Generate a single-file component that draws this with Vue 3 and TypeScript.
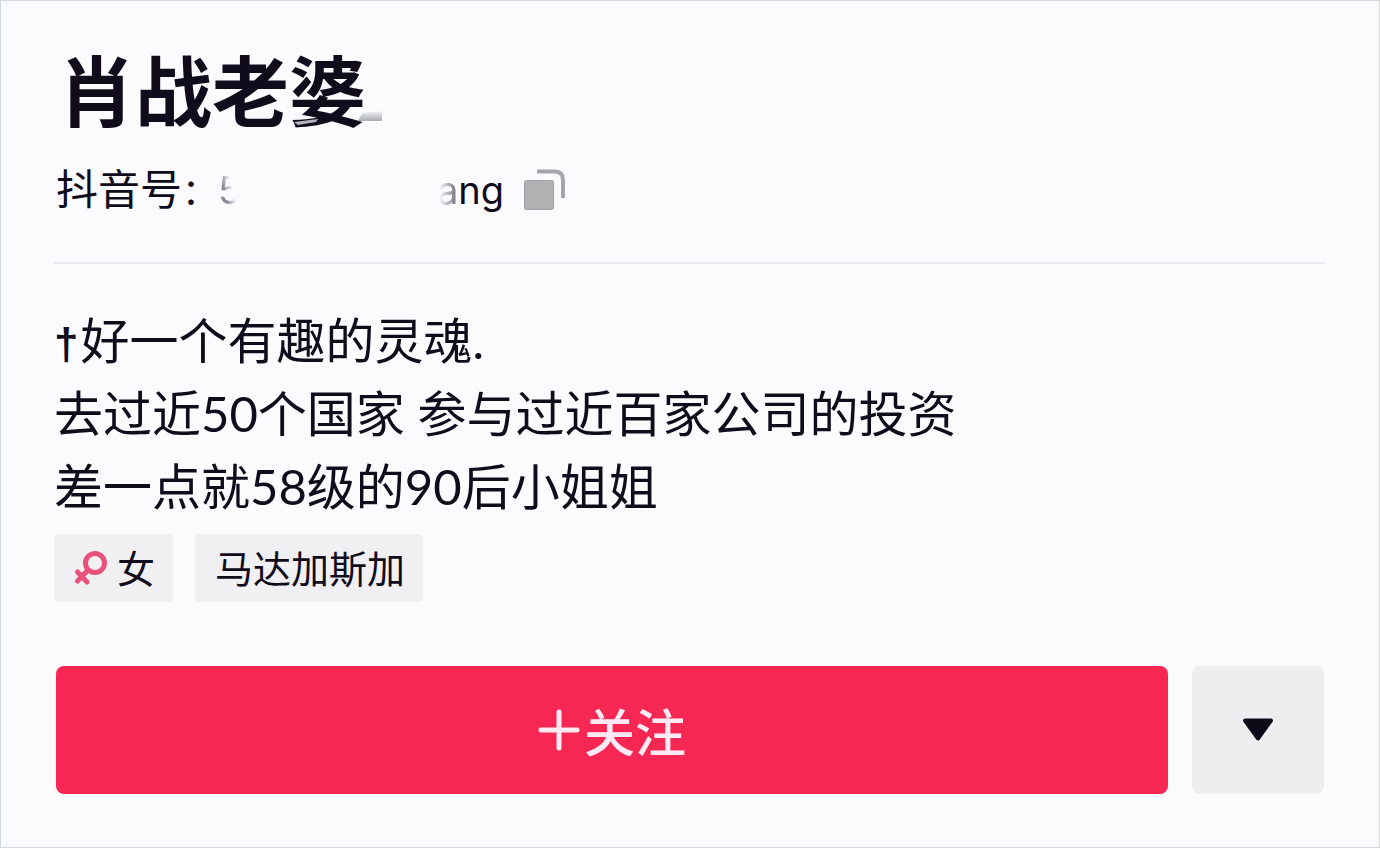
<script setup lang="ts">
const name = '肖战老婆'
const bio: string[] = [
  '好一个有趣的灵魂.',
  '去过近50个国家 参与过近百家公司的投资',
  '差一点就58级的90后小姐姐',
]
</script>

<template>
  <main class="profile">
    <header class="head">
      <h1 class="name">
        {{ name }}
        <svg class="smudge" viewBox="0 0 88 18" aria-hidden="true">
          <defs>
            <linearGradient id="smudgeFade" x1="0" y1="0" x2="0" y2="1">
              <stop offset="0" stop-color="#f4f5f9" />
              <stop offset="1" stop-color="#a9a9b2" />
            </linearGradient>
          </defs>
          <path d="M68 5 L88 3 V13 H64 Z" fill="url(#smudgeFade)" />
          <path d="M0 14 L24 11 L22 14 L4 17 Z" fill="#b4b4bc" />
        </svg>
      </h1>
      <div class="account">
        <span>抖音号<span class="colon">：</span></span>
        <span class="id"><span class="first">5</span><span class="last"><span class="faint">a</span>ng</span></span>
        <button class="copy" type="button" aria-label="复制抖音号">
          <svg viewBox="0 0 42 42" aria-hidden="true">
            <rect x="0.5" y="11.5" width="29" height="29" rx="2" fill="#b2b2b4" stroke="#9d9da1" />
            <path d="M13 2.5 H31 Q39 2.5 39 11 V29" fill="none" stroke="#a6a4a9" stroke-width="4" />
          </svg>
        </button>
      </div>
    </header>

    <section class="about">
      <p v-for="(line, i) in bio" :key="line" class="line"><span v-if="i === 0" class="dagger">†</span>{{ line }}</p>
      <ul class="tags">
        <li class="tag">
          <svg class="female" viewBox="0 0 34 34" aria-hidden="true">
            <g fill="none" stroke="#e9527c" stroke-linecap="round" stroke-width="5">
              <circle cx="21" cy="12" r="9.5" />
              <path d="M14 19 L3.5 30 M3.5 21 L13 31" />
            </g>
          </svg>
          <span>女</span>
        </li>
        <li class="tag">马达加斯加</li>
      </ul>
    </section>

    <div class="actions">
      <button class="follow" type="button">
        <svg class="plus" viewBox="0 0 42 42" aria-hidden="true">
          <path d="M21 3 V39 M3 21 H39" fill="none" stroke="#ffeaf3" stroke-width="5" stroke-linecap="round" />
        </svg>
        <span>关注</span>
      </button>
      <button class="more" type="button" aria-label="更多">
        <svg viewBox="0 0 32 24" aria-hidden="true">
          <path d="M3 2.5 H29 L16 20.5 Z" fill="#0e0b18" stroke="#0e0b18" stroke-width="4" stroke-linejoin="round" />
        </svg>
      </button>
    </div>
  </main>
</template>

<style>
body {
  margin: 0;
  background: #fbfbfe;
}
</style>

<style scoped>
.profile {
  box-sizing: border-box;
  min-height: 100vh;
  padding: 37px 54px 50px 53px;
  border: 1px solid #d3d8dd;
  background: #fbfbfe;
  color: #100c1c;
  font-family: Lato, "Noto Sans CJK SC", sans-serif;
}

.head {
  padding-bottom: 42px;
  border-bottom: 2px solid #e9eaed;
}

.name {
  position: relative;
  width: max-content;
  margin: 0;
  padding-left: 4px;
  font-family: "Noto Sans CJK SC", sans-serif;
  font-size: 77px;
  line-height: 100px;
  font-weight: 700;
}

.smudge {
  position: absolute;
  right: -16px;
  bottom: 12px;
  width: 88px;
  height: 18px;
}

.account {
  display: flex;
  align-items: center;
  margin-top: 22px;
  padding-left: 2px;
  font-size: 42px;
  line-height: 58px;
}

.colon {
  font-size: 36px;
}

.id {
  display: flex;
  justify-content: space-between;
  width: 286px;
  font-family: Inter, sans-serif;
  font-size: 38px;
}

.first {
  color: #8b8893;
  mask-image: linear-gradient(75deg, #000 35%, transparent 60%);
}

.faint {
  color: #77737f;
  mask-image: linear-gradient(90deg, transparent 10%, #000 90%);
}

.copy {
  margin-left: 20px;
  padding: 0;
  border: 0;
  background: none;
}

.copy svg {
  display: block;
  width: 42px;
  height: 42px;
}

.about {
  padding-top: 40px;
}

.line {
  margin: 0;
  font-size: 49px;
  line-height: 73px;
}

.dagger {
  margin-right: 2px;
  font-family: "Liberation Sans", sans-serif;
  font-size: 44px;
  line-height: 1;
  font-weight: 700;
}

.tags {
  display: flex;
  gap: 22px;
  margin: 11px 0 0;
  padding: 0;
  list-style: none;
}

.tag {
  display: flex;
  align-items: center;
  gap: 9px;
  box-sizing: border-box;
  height: 68px;
  padding: 0 18px 0 20px;
  border-radius: 5px;
  background: #f0f0f2;
  font-size: 38px;
  line-height: 44px;
}

.female {
  width: 34px;
  height: 34px;
}

.actions {
  display: flex;
  gap: 24px;
  margin-top: 64px;
  padding: 0 1px 0 2px;
}

.follow,
.more {
  display: flex;
  align-items: center;
  justify-content: center;
  height: 128px;
  padding: 0;
  border: 0;
  border-radius: 8px;
}

.follow {
  flex: 1;
  gap: 4px;
  background: #f62853;
  color: #ffeaf3;
  font-family: inherit;
  font-size: 51px;
  font-weight: 500;
}

.plus {
  width: 42px;
  height: 42px;
}

.more {
  width: 132px;
  background: #eeeef0;
}

.more svg {
  width: 32px;
  height: 24px;
}
</style>
